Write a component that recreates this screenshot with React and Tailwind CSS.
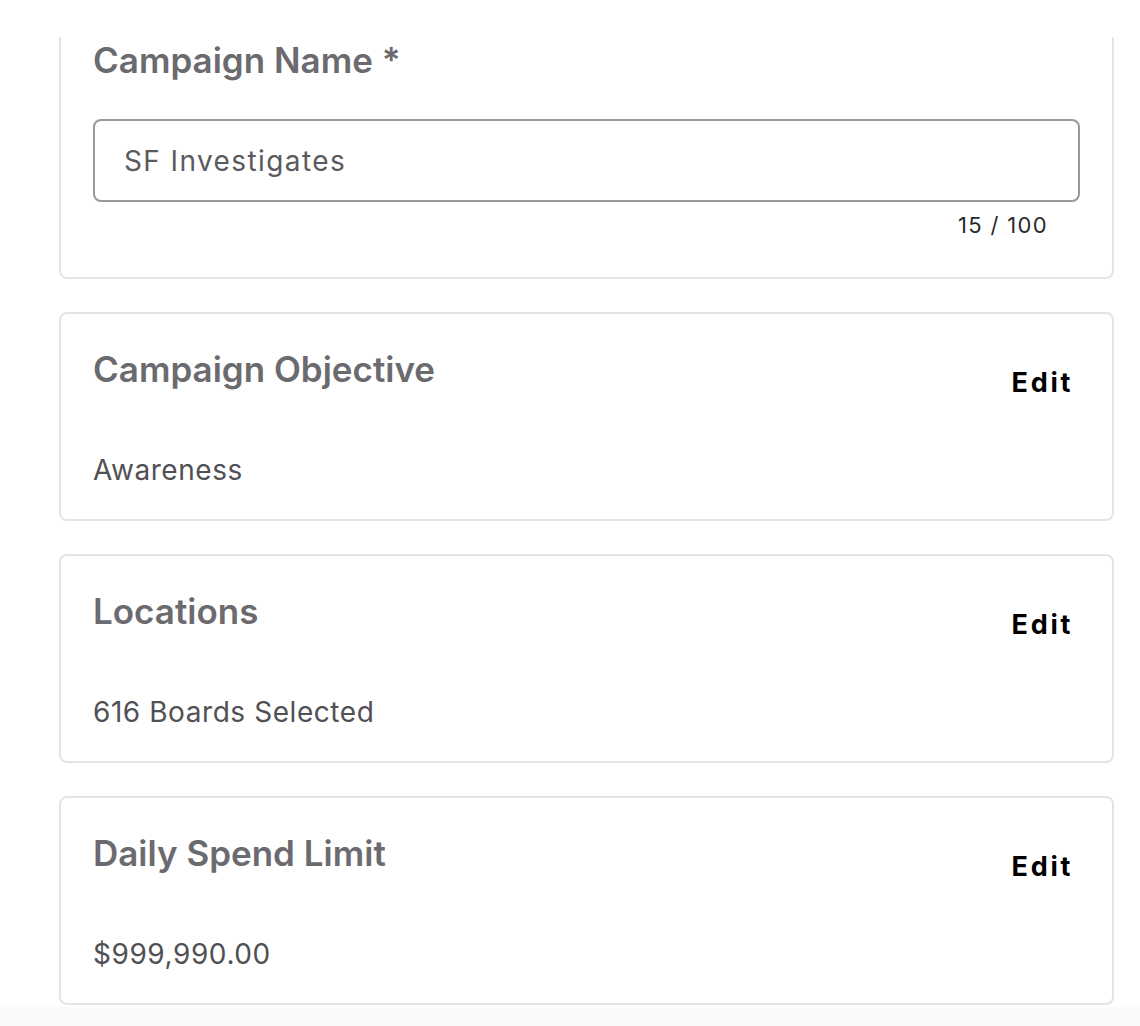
const sections = [
  { title: "Campaign Objective", value: "Awareness" },
  { title: "Locations", value: "616 Boards Selected" },
  { title: "Daily Spend Limit", value: "$999,990.00" },
];

const SummaryCard = ({ title, value }) => (
  <div className="h-[209px] border-2 border-[#e4e4e4] rounded-lg bg-white pl-[32px] pr-[39px] pt-[33px]">
    <div className="flex justify-between items-start">
      <h2 className="text-[35px] leading-[44px] font-semibold text-[#6b6b6f]">{title}</h2>
      <button className="mt-[19px] text-[27px] leading-[34px] font-bold tracking-[0.1em] text-black">
        Edit
      </button>
    </div>
    <p className="mt-[53px] text-[28px] leading-[34px] tracking-[0.02em] text-[#505055]">{value}</p>
  </div>
);

const App = () => {
  const name = "SF Investigates";

  return (
    <div className="min-h-screen flex flex-col bg-[#fafafa] font-['Inter',sans-serif]">
      <div className="bg-white pl-[59px] pr-[26px] pb-[2px]">
        <div className="h-[37px]"></div>
        <div className="flex flex-col gap-[33px]">
          <div className="h-[242px] border-2 border-t-0 border-[#e4e4e4] rounded-b-lg bg-white px-[32px] pt-[1px]">
            <h2 className="text-[35px] leading-[44px] font-semibold text-[#6b6b6f]">Campaign Name *</h2>
            <div className="mt-[37px] h-[83px] border-2 border-[#9a9a9a] rounded-lg flex items-center px-[29px]">
              <span className="text-[28px] tracking-[0.05em] text-[#5a5a5e]">{name}</span>
            </div>
            <div className="flex justify-end pr-[32px] mt-[9px]">
              <span className="text-[22px] leading-[28px] tracking-[0.06em] text-[#2a2a2a]">
                {name.length} / 100
              </span>
            </div>
          </div>
          {sections.map((s) => (
            <SummaryCard key={s.title} title={s.title} value={s.value} />
          ))}
        </div>
      </div>
      <div className="flex-1"></div>
    </div>
  );
};

export default App;
